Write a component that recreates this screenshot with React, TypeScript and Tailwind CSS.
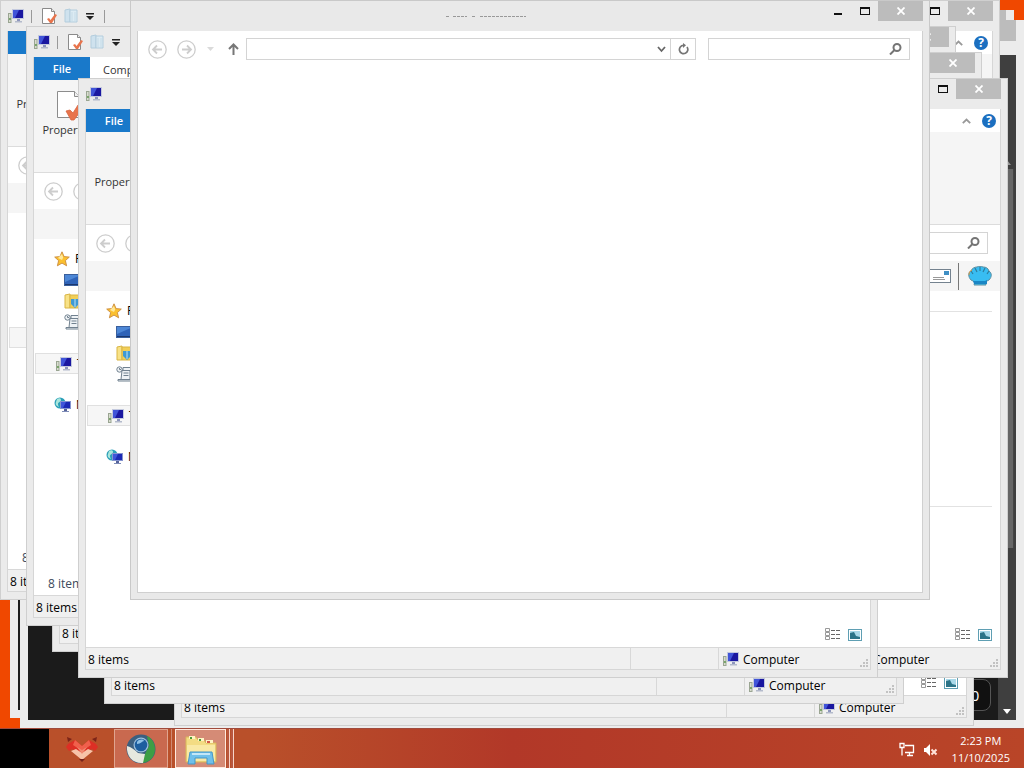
import React from "react";

type Kids = { children?: React.ReactNode };

function PcIcon() {
  return (
    <svg width="16" height="16" viewBox="0 0 16 16" className="shrink-0" aria-hidden="true">
      <rect x="4" y="1" width="12" height="10" fill="#c3c9de" />
      <rect x="5" y="2" width="10" height="8" fill="#1a17a0" />
      <path d="M5 2h6L7 10H5z" fill="#4054d8" />
      <rect x="9" y="11" width="3" height="2" fill="#8d95bd" />
      <rect x="7" y="13" width="7" height="1.5" fill="#b3bacb" />
      <rect x="0.5" y="5.5" width="2.5" height="9" fill="#d9ddd0" stroke="#9aa592" />
      <rect x="1" y="10" width="2" height="2" fill="#7aa56c" />
    </svg>
  );
}

function DocCheckIcon() {
  return (
    <svg width="16" height="16" viewBox="0 0 16 16" className="shrink-0" aria-hidden="true">
      <path d="M1.500.500h9l3 3v12h-12z" fill="#fff" stroke="#8a8a8a" />
      <path d="M10.500.500v3h3" fill="#eee" stroke="#8a8a8a" />
      <path d="M6 11l2-1 1.500 2L14 6l2 1-5 8H9z" fill="#e8744c" />
    </svg>
  );
}

function BigDocCheckIcon() {
  return (
    <svg width="24" height="32" viewBox="0 0 24 32" className="shrink-0" aria-hidden="true">
      <path d="M.5 2.500h17l5 5v21H.5z" fill="#fff" stroke="#8c8c8c" />
      <path d="M17.500 2.500v5h5" fill="#f0f0f0" stroke="#8c8c8c" />
      <path d="M9 22l4-1 3 3 5-8 2 1v6l-6 8h-3z" fill="#e8744c" stroke="#d8643f" strokeWidth=".8" />
    </svg>
  );
}

function FolderPaleIcon() {
  return (
    <svg width="16" height="16" viewBox="0 0 16 16" className="shrink-0" aria-hidden="true">
      <path d="M2 2l5-1v13H2z" fill="#cfe2ee" stroke="#b3cddd" />
      <path d="M7 2h7v12H7z" fill="#dcebf3" stroke="#b3cddd" />
      <path d="M9 4v9M12 4v9" stroke="#c6dbe7" />
    </svg>
  );
}

function StarIcon() {
  return (
    <svg width="16" height="16" viewBox="0 0 16 16" className="shrink-0" aria-hidden="true">
      <path d="M8 .8l2.1 4.8 5.2.5-3.9 3.5 1.2 5.2L8 12.1l-4.6 2.7 1.2-5.2L.7 6.1l5.2-.5z" fill="#fbc02e" stroke="#c98a3d" strokeWidth=".9" />
      <path d="M8 3l1.2 3.4L8 9 4 7z" fill="#ffe89a" />
    </svg>
  );
}

function DesktopIcon() {
  return (
    <svg width="18" height="14" viewBox="0 0 18 14" className="shrink-0" aria-hidden="true">
      <rect x=".5" y="1.5" width="17" height="11" fill="#2f63b8" stroke="#3a5f9c" />
      <path d="M1 2h16L1 9z" fill="#4d87d6" />
      <path d="M1 11.5h16" stroke="#1a376e" />
    </svg>
  );
}

function DownloadsIcon() {
  return (
    <svg width="16" height="16" viewBox="0 0 16 16" className="shrink-0" aria-hidden="true">
      <path d="M1 2l5-1v14H1z" fill="#f8e287" stroke="#d9b545" />
      <path d="M6 2h9v13H6z" fill="#f2cf58" stroke="#d9b545" />
      <path d="M7 6h8v5l-4 4-4-4z" fill="#3f9ad4" />
      <path d="M11 6v8" stroke="#bfe2f5" />
    </svg>
  );
}

function RecentIcon() {
  return (
    <svg width="16" height="16" viewBox="0 0 16 16" className="shrink-0" fill="#eef2f5" stroke="#71818f" aria-hidden="true">
      <circle cx="3.5" cy="3.5" r="2.7" />
      <path d="M3.500 2v1.500h1.500M7 1.500h8v3H7zM6 4.500h8v9H5z" />
      <path d="M7.500 7h5M7.500 9.500h5M2 13.500h13v1.500H2z" />
    </svg>
  );
}

function NetworkIcon() {
  return (
    <svg width="17" height="16" viewBox="0 0 17 16" className="shrink-0" aria-hidden="true">
      <circle cx="6" cy="6" r="5.500" fill="#2a9fb8" />
      <path d="M3 2c2-1 4-1 4 1S4 5 4 7s1 2 1 3C2 9 1 7 2 5z" fill="#a9e6dc" />
      <rect x="6.500" y="4.500" width="10" height="7" fill="#1c2ab5" stroke="#8594cf" />
      <path d="M7 5h5l-3 6H7z" fill="#3f55da" />
      <rect x="10" y="12" width="3" height="2" fill="#566399" />
      <rect x="8" y="14" width="7" height="1" fill="#7f8db8" />
    </svg>
  );
}

function MailIcon() {
  return (
    <svg width="22" height="14" viewBox="0 0 22 14" className="shrink-0" aria-hidden="true">
      <rect x=".5" y=".5" width="21" height="13" fill="#fff" stroke="#74828f" />
      <rect x="15" y="2" width="5" height="4" fill="#3f8fc4" />
      <path d="M4 8.500h11M4 10.500h12" stroke="#999" />
    </svg>
  );
}

function ShellIcon() {
  return (
    <svg width="24" height="20" viewBox="0 0 24 20" className="shrink-0" aria-hidden="true">
      <path d="M6 19l1-3-4-2C0 11 0 6 3 5c1-3 4-4 6-4 2-1 4-1 6 0 3 0 5 1 6 4 3 2 3 6 0 9l-4 2 1 3z" fill="#38bdf2" stroke="#5d8ea0" />
      <path d="M5 8L3 5M9 6L7 2M12 5V1M15 6l2-4M19 8l2-3" stroke="#2d7d9f" strokeWidth="1.200" />
      <path d="M5 15h14l-2-1h2v4H6z" fill="#1b86c4" />
      <path d="M1 9c0-3 1-4 3-5" stroke="#d79a45" fill="none" />
    </svg>
  );
}

function DetailsViewIcon() {
  return (
    <svg width="15" height="13" viewBox="0 0 15 13" aria-hidden="true">
      <path d="M.5.500h4v3h-4zM.5 4.500h4v3h-4zM.5 8.500h4v3h-4z" fill="#fff" stroke="#999" />
      <path d="M6 2.500h9M6 6.500h9M6 10.500h9" stroke="#666" strokeDasharray="4 1" />
    </svg>
  );
}

function IconsViewIcon() {
  return (
    <svg width="14" height="12" viewBox="0 0 14 12" aria-hidden="true">
      <rect x=".5" y=".5" width="13" height="11" fill="#fff" stroke="#5f9fb3" />
      <rect x="2" y="2" width="10" height="8" fill="#a9d8e8" />
      <path d="M2 4l4-1 2 4 4 1v2H2z" fill="#2c7488" />
    </svg>
  );
}

function Glass() {
  return (
    <svg width="13" height="12" viewBox="0 0 13 12" fill="none" stroke="#757575" strokeWidth="2" className="shrink-0" aria-hidden="true">
      <circle cx="8" cy="4.500" r="3.500" />
      <path d="M5.500 7L1 11.500" />
    </svg>
  );
}

function CircleArrow({ flip = false, label }: { flip?: boolean; label: string }) {
  return (
    <button aria-label={label} className="shrink-0">
      <svg width="19" height="19" viewBox="0 0 19 19" fill="none" stroke="#cdcdcd" className={flip ? "block rotate-180" : "block"}>
        <circle cx="9.500" cy="9.500" r="8.700" strokeWidth="1.300" />
        <path d="M14 9.500H5.500M9 5.500l-4 4 4 4" strokeWidth="1.800" />
      </svg>
    </button>
  );
}

function AddressBar() {
  return (
    <div className="flex h-[36px] shrink-0 items-center bg-white pr-[12px] pl-[10px]">
      <CircleArrow label="Back" />
      <span className="w-[10px] shrink-0" />
      <CircleArrow label="Forward" flip />
      <svg width="7" height="4" className="ml-[11px] shrink-0" aria-hidden="true"><path d="M0 0h7L3.500 4z" fill="#dadada" /></svg>
      <button aria-label="Up" className="mr-[7px] ml-[14px] shrink-0">
        <svg width="11" height="12" viewBox="0 0 11 12" fill="none" stroke="#777" strokeWidth="2" className="block"><path d="M5.500 12V1.500M1 6l4.500-4.500L10 6" /></svg>
      </button>
      <div className="flex h-[22px] grow items-center border border-[#d4d4d4]">
        <input aria-label="Address" className="h-full min-w-0 grow outline-none" />
        <button aria-label="Previous locations" className="mr-[4px]">
          <svg width="9" height="7" viewBox="0 0 9 7" fill="none" stroke="#666" strokeWidth="1.800" className="block"><path d="M1 1l3.500 4L8 1" /></svg>
        </button>
        <button aria-label="Refresh" className="flex h-full w-[25px] items-center justify-center border-l border-[#d4d4d4]">
          <svg width="11" height="12" viewBox="0 0 11 12" fill="none" stroke="#757575" strokeWidth="1.700"><path d="M9 4a4.200 4.200 0 1 1-3.500-1.700" /><path d="M5 0l3 2.300L5 5z" fill="#757575" stroke="none" /></svg>
        </button>
      </div>
      <div className="ml-[12px] flex h-[22px] w-[202px] shrink-0 items-center border border-[#d4d4d4] pr-[7px]">
        <input aria-label="Search" className="h-full min-w-0 grow outline-none" />
        <Glass />
      </div>
    </div>
  );
}

function TitleBar({ quick, front }: { quick?: boolean; front?: boolean }) {
  return (
    <div className="flex h-[30px] shrink-0 items-start">
      {!front && (
        <div className="flex h-full items-center pl-px">
          <PcIcon />
          {quick && (
            <div className="flex items-center">
              <span className="mx-[7px] h-[13px] w-px bg-[#999]" />
              <span className="mr-[6px] ml-[2px]"><DocCheckIcon /></span>
              <FolderPaleIcon />
              <svg width="8" height="7" className="mx-[7px]" aria-hidden="true"><path d="M0 0h8v1.500H0zM0 3h8L4 7z" fill="#222" /></svg>
              <span className="ml-[3px] h-[13px] w-px bg-[#999]" />
            </div>
          )}
        </div>
      )}
      <div className="flex h-full grow items-center justify-center">
        {front && (
          <svg width="82" height="3" className="ml-[10px]" aria-hidden="true">
            <path d="M1 1.500h3M8 1.500h14M27 1.500h3M35 1.500h46" stroke="#999" strokeDasharray="3 1" />
          </svg>
        )}
      </div>
      <button aria-label="Minimize" className="flex h-[20px] w-[28px] items-center justify-center">
        <span className="mt-[6px] h-[2px] w-[8px] bg-[#111]" />
      </button>
      <button aria-label="Maximize" className="flex h-[20px] w-[26px] items-center justify-center">
        <span className="h-[8px] w-[10px] border border-t-2 border-[#111]" />
      </button>
      <button aria-label="Close" className="flex h-[20px] w-[45px] items-center justify-center bg-[#bcbcbc]">
        <svg width="8" height="8" viewBox="0 0 8 8" stroke="#fff" strokeWidth="1.800"><path d="M.5.500l7 7M7.500.500l-7 7" /></svg>
      </button>
    </div>
  );
}

function NavRow({ children, indent }: Kids & { indent?: boolean }) {
  return (
    <a href="#nav" className={`flex h-[21px] items-center gap-[5px] text-black ${indent ? "pl-[30px]" : "pl-[20px]"}`}>
      {children}
    </a>
  );
}

type WinProps = {
  place: string;
  quick?: boolean;
  fileLabel?: string;
  tab?: string;
  ribbon?: boolean;
  big?: boolean;
  nav?: "full" | "selection";
  count?: boolean;
  items?: boolean;
  location?: boolean;
};

function Explorer({ place, quick, fileLabel, tab, ribbon, big, nav, count, items, location }: WinProps) {
  return (
    <section className={`absolute flex h-[600px] w-[800px] flex-col overflow-hidden border border-[#cfcfcf] bg-[#ebebeb] px-[6px] pb-[7px] ${place}`}>
      <TitleBar quick={quick} />
      <div className="flex min-h-0 grow flex-col border border-t-0 border-[#d6d6d6] bg-white">
        <div className="flex h-[23px] shrink-0 items-center bg-white text-[11px]">
          <button className="h-full w-[56px] bg-[#1979ca] pt-px font-semibold text-white">{fileLabel}</button>
          {tab && <button className="ml-[13px] pt-[3px]">{tab}</button>}
          <span className="grow" />
          <svg width="9" height="6" viewBox="0 0 9 6" fill="none" stroke="#999" strokeWidth="1.800" aria-hidden="true"><path d="M.8 5.200L4.500 1.500l3.700 3.700" /></svg>
          <button aria-label="Help" className="mr-[4px] ml-[11px] flex size-[14px] items-center justify-center rounded-full bg-[#1b6fc0] text-[12px] font-bold text-white">?</button>
        </div>
        <div className="h-[93px] shrink-0 border-b border-[#dcdcdc] bg-[#f5f5f5]">
          {ribbon && (
            <div className="flex w-[70px] flex-col items-center pt-[8px] text-[11px] text-[#333]">
              <span className="flex h-[33px] items-center">{big && <BigDocCheckIcon />}</span>
              <span className="leading-[18px]">Properties</span>
            </div>
          )}
        </div>
        <AddressBar />
        <div className="flex h-[30px] shrink-0 items-center justify-end bg-[#f5f5f5] pr-[8px]">
          <MailIcon />
          <span className="mr-[9px] ml-[7px] h-[27px] w-px bg-[#777]" />
          <ShellIcon />
        </div>
        <div className="flex min-h-0 grow text-[12px]">
          <nav className="w-[185px] shrink-0 pt-[9px]">
            {nav === "full" && (
              <>
                <NavRow><StarIcon />Favorites</NavRow>
                <NavRow indent><DesktopIcon />Desktop</NavRow>
                <NavRow indent><DownloadsIcon />Downloads</NavRow>
                <NavRow indent><RecentIcon />Recent places</NavRow>
                <div className="mt-[21px] ml-px flex h-[21px] flex-col justify-center border border-[#e0e0e0] bg-[#f6f6f6]">
                  <NavRow><PcIcon />This PC</NavRow>
                </div>
                <div className="mt-[20px]">
                  <NavRow><NetworkIcon />Network</NavRow>
                </div>
              </>
            )}
            {nav === "selection" && <div className="mt-[105px] ml-px h-[21px] border border-[#e0e0e0] bg-[#f6f6f6]" />}
          </nav>
          <div className="grow pt-[20px] pr-[8px]">
            <div className="h-[195px] border-t border-[#e2e2e2]" />
            <div className="border-t border-[#e2e2e2]" />
          </div>
        </div>
        <div className="flex h-[25px] shrink-0 items-center pr-[8px] pl-[14px] text-[12px] text-[#3b4a5c]">
          {count && <span className="pt-[2px]">8 items</span>}
          <span className="grow" />
          <button aria-label="Details view"><DetailsViewIcon /></button>
          <button aria-label="Icon view" className="ml-[8px]"><IconsViewIcon /></button>
        </div>
        <footer className="flex h-[22px] shrink-0 items-center border-t border-[#d8d8d8] bg-[#f0f0f0] text-[12px] text-black">
          <span className="grow pt-[2px] pl-[2px]">{items && "8 items"}</span>
          <span className="h-full w-[88px] border-l border-[#d8d8d8]" />
          <span className="flex h-full w-[152px] items-center gap-[4px] border-l border-[#d8d8d8] pl-[4px]">
            <PcIcon />
            <span className="grow pt-[2px]">{location && "Computer"}</span>
            <svg width="8" height="8" className="mr-[2px] mb-[2px] self-end" fill="#c2c2c2" aria-hidden="true"><path d="M6 0h2v2H6zM6 3h2v2H6zM6 6h2v2H6zM3 3h2v2H3zM3 6h2v2H3zM0 6h2v2H0z" /></svg>
          </span>
        </footer>
      </div>
    </section>
  );
}

function FrontWindow() {
  return (
    <section className="absolute top-0 left-[130px] flex h-[600px] w-[800px] flex-col border border-[#c9c9c9] bg-[#e9e9e9] px-[6px] pb-[6px]">
      <TitleBar front />
      <div className="grow border border-[#d0d0d0] border-t-0 bg-white">
        <AddressBar />
      </div>
    </section>
  );
}

function BackWindows() {
  return (
    <>
      <section className="absolute top-[10px] right-[10px] bottom-[50px] left-[10px] flex bg-[#ebebeb] p-2 pt-0">
        <div className="grow bg-[#1b1b1b]" />
        <div className="h-[20px] w-[7px] bg-[#bcbcbc]" />
      </section>
      <section className="absolute top-[20px] right-0 bottom-[40px] left-[20px] flex flex-col bg-[#ececec] px-2 pb-2">
        <div className="flex h-[35px] justify-end">
          <span className="h-[21px] w-[45px] bg-[#bcbcbc]" />
        </div>
        <div className="flex grow bg-[#1b1b1b]">
          <div className="flex grow items-end justify-end pr-[7px] pb-[9px]">
            <button className="size-[32px] rounded-lg border border-[#555] bg-[#111] text-center text-[15px] text-white">0</button>
          </div>
          <div className="flex w-[18px] flex-col items-center bg-[#3f3f3f] pt-[105px] pb-[6px]">
            <svg width="8" height="5" aria-hidden="true"><path d="M0 5h8L4 0z" fill="#999" /></svg>
            <span className="mt-[4px] h-[379px] w-[14px] border-r border-[#444] bg-[#666]" />
            <span className="grow" />
            <svg width="8" height="5" aria-hidden="true"><path d="M0 0h8L4 5z" fill="#fff" /></svg>
          </div>
        </div>
      </section>
    </>
  );
}

function FoxIcon() {
  return (
    <svg width="34" height="28" viewBox="0 0 34 28" aria-hidden="true">
      <path d="M2 2l5 2-4 3zM32 2l-5 2 4 3z" fill="#7c2418" />
      <path d="M1 12l2-3 7-4 7 6 7-6 7 4 2 3-3 4-3-2-10 7-10-7-3 2z" fill="#dd2f25" />
      <path d="M10 5l7 6 7-6 2 5-9 6-9-6z" fill="#f0604c" />
      <path d="M6 16l5-2 6 4 6-4 5 2-11 9z" fill="#f7c3a8" />
      <path d="M12 12l5 3 5-3-5 7z" fill="#f08a70" />
      <path d="M14 24h6l-3 3z" fill="#76231a" />
    </svg>
  );
}

function GlobeIcon() {
  return (
    <svg width="30" height="30" viewBox="0 0 30 30" aria-hidden="true">
      <circle cx="15" cy="15" r="14.500" fill="#3c5f80" />
      <path d="M21 2c9 4 11 17 3 24-3 2-6 3-9 3l4-9 4-8z" fill="#3c9e45" />
      <path d="M1 12c4 1 8 4 11 7l7 1-2 9C8 30 0 23 1 12z" fill="#e6e8df" />
      <circle cx="15" cy="11" r="7.500" fill="#9fc0dc" />
      <circle cx="15" cy="11" r="6.300" fill="#1d5e9f" />
      <path d="M11 8c2-3 6-3 7-1-2 0-3 3-7 3z" fill="#8fc1e6" />
    </svg>
  );
}

function FoldersIcon() {
  return (
    <svg width="32" height="32" viewBox="0 0 32 32" aria-hidden="true">
      <path d="M1 4h10l2 3h6l2 3h10v19H1z" fill="#f3dc83" stroke="#d8b65a" />
      <path d="M4 3h6v3H4zM13 5h6v3h-6zM21 7h7v3h-7z" fill="#fff3c4" />
      <path d="M5 4h2v2H5z" fill="#4a9a3a" /><path d="M14 6h2v2h-2z" fill="#4a9a3a" /><path d="M22 8h3v2h-3z" fill="#d4574a" />
      <path d="M2 12h28v16H2z" fill="#f9e9a5" />
      <path d="M5 19h22l2 12h-7v-6H10v6H3z" fill="#6fc0ea" stroke="#4596c6" />
      <path d="M7 20h18v2H7z" fill="#c3e7f7" />
    </svg>
  );
}

function Taskbar() {
  return (
    <footer className="absolute inset-x-0 bottom-0 flex h-[40px] items-stretch border-t border-[#a04a3c] bg-linear-to-r from-[#b9502a] from-25% via-[#b23828] via-50% to-[#b94528] text-white">
      <div className="w-[49px] bg-black" />
      <button aria-label="Fox app" className="flex w-[65px] items-center justify-center"><FoxIcon /></button>
      <div className="flex border-r border-[#d08a74] pr-[3px]">
        <button aria-label="Browser" className="flex w-[54px] items-center justify-center border border-[#e0a48f] bg-[#c9694f]"><GlobeIcon /></button>
      </div>
      <div className="ml-[3px] flex gap-px">
        <button aria-label="File Explorer" className="flex w-[51px] items-center justify-center border border-[#ffe9de] bg-[#d58b76]"><FoldersIcon /></button>
        <span className="w-[3px] border-r border-[#f6d5c8] bg-[#b9583f]" />
        <span className="w-[3px] border-r border-[#f6d5c8] bg-[#b9583f]" />
      </div>
      <div className="grow" />
      <div className="flex items-center gap-[8px] pt-[2px]">
        <svg width="16" height="15" viewBox="0 0 16 15" fill="none" stroke="#fff" strokeWidth="1.300" aria-label="Network">
          <path d="M6 3.500h8.500v7H6M8 13.500h6M10.500 10.500v3" />
          <path d="M1 1.500h4v4H1zM3 5.500v8" />
        </svg>
        <svg width="15" height="14" viewBox="0 0 15 14" aria-label="Muted">
          <path d="M1 5h2l4-4v12L3 9H1z" fill="#fff" />
          <path d="M8.500 6.500l5 5M13.500 6.500l-5 5" stroke="#ffe3da" strokeWidth="2" />
        </svg>
      </div>
      <div className="mr-[14px] ml-[14px] flex flex-col items-center justify-center text-[11px] leading-[17px]">
        <span>2:23 PM</span>
        <span>11/10/2025</span>
      </div>
    </footer>
  );
}

export default function App() {
  return (
    <main className="relative h-screen min-h-[768px] overflow-hidden bg-[#f04800] font-['Open_Sans','Noto_Sans',sans-serif] text-[#333]">
      <BackWindows />
      <Explorer place="left-[200px] top-0" />
      <Explorer place="left-[174px] top-[126px]" items location />
      <Explorer place="left-[156px] top-[26px]" />
      <Explorer place="left-[182px] top-[52px]" />
      <Explorer place="left-[104px] top-[104px]" items location />
      <Explorer place="left-[208px] top-[78px]" location />
      <Explorer place="left-[52px] top-[52px]" items />
      <Explorer place="left-0 top-0" quick ribbon nav="selection" count items />
      <Explorer place="left-[26px] top-[26px]" quick fileLabel="File" tab="Computer" ribbon big nav="full" count items />
      <Explorer place="left-[78px] top-[78px]" fileLabel="File" ribbon nav="full" items location />
      <FrontWindow />
      <Taskbar />
    </main>
  );
}
